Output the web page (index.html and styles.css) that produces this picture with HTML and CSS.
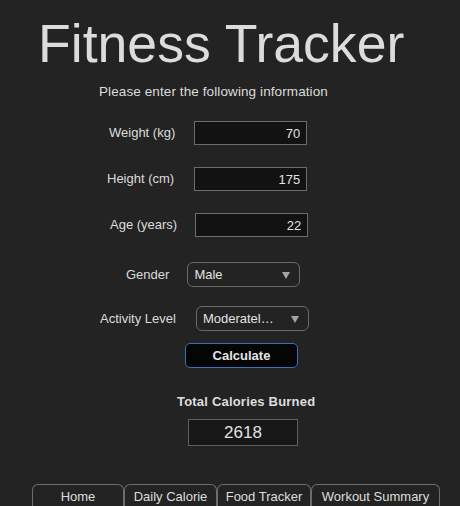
FILE: index.html
```html
<!DOCTYPE html>
<html lang="en">
<head>
<meta charset="utf-8">
<title>Fitness Tracker</title>
<link rel="stylesheet" href="styles.css">
</head>
<body>
<main class="app">
  <h1 class="title">Fitness Tracker</h1>
  <p class="subtitle">Please enter the following information</p>

  <div class="row row-weight">
    <label class="label" for="weight">Weight (kg)</label>
    <input class="field" id="weight" type="text" value="70">
  </div>
  <div class="row row-height">
    <label class="label" for="height">Height (cm)</label>
    <input class="field" id="height" type="text" value="175">
  </div>
  <div class="row row-age">
    <label class="label" for="age">Age (years)</label>
    <input class="field" id="age" type="text" value="22">
  </div>
  <div class="row row-gender">
    <span class="label">Gender</span>
    <div class="select"><span class="select-text">Male</span><span class="caret"></span></div>
  </div>
  <div class="row row-activity">
    <span class="label">Activity Level</span>
    <div class="select"><span class="select-text">Moderatel…</span><span class="caret"></span></div>
  </div>
  <div class="row row-button">
    <button class="btn" type="button">Calculate</button>
  </div>

  <div class="result-title">Total Calories Burned</div>
  <div class="result-row">
    <div class="result">2618</div>
  </div>

  <nav class="tabs">
    <div class="tab tab-home">Home</div>
    <div class="tab tab-daily">Daily Calorie</div>
    <div class="tab tab-food">Food Tracker</div>
    <div class="tab tab-workout">Workout Summary</div>
  </nav>
</main>
</body>
</html>
```

FILE: styles.css
```css
html, body {
  margin: 0;
  padding: 0;
  height: 506px;
  overflow: hidden;
  background: #232323;
}

body {
  font-family: "Liberation Sans", Arial, sans-serif;
  font-size: 13px;
  color: #dedede;
}

.app {
  display: flex;
  flex-direction: column;
}

.title {
  margin: 13px 0 0 0;
  padding-left: 38px;
  font-size: 53.6px;
  font-weight: normal;
  line-height: 60px;
  height: 60px;
  color: #dcdcdc;
}

.subtitle {
  margin: 11px 0 0 0;
  padding-left: 99px;
  line-height: 16px;
  font-size: 13.5px;
  letter-spacing: 0.1px;
  color: #dcdcdc;
}

.row {
  display: flex;
  align-items: center;
  gap: 18px;
}

.label {
  line-height: 16px;
  color: #dcdcdc;
}

.row-weight { margin-top: 21px; padding-left: 109px; gap: 19px; }
.row-height { margin-top: 22px; padding-left: 107px; gap: 20px; }
.row-age { margin-top: 22px; padding-left: 110px; gap: 18px; }
.row-gender { margin-top: 25px; padding-left: 126px; gap: 18px; }
.row-activity { margin-top: 19px; padding-left: 100px; gap: 20px; }
.row-button { margin-top: 12px; padding-left: 185px; }

.field {
  box-sizing: border-box;
  width: 113px;
  height: 24px;
  margin: 0;
  padding: 0 6px;
  background: #121212;
  border: 1px solid #6c6c6c;
  border-radius: 0;
  color: #e2e2e2;
  font-family: inherit;
  font-size: 13px;
  text-align: right;
  outline: none;
}

.select {
  box-sizing: border-box;
  width: 113px;
  height: 25px;
  display: flex;
  align-items: center;
  justify-content: space-between;
  padding: 0 9px 0 6px;
  border: 1px solid #6a6a6a;
  border-radius: 6px;
  color: #e2e2e2;
}

.select-text {
  line-height: 16px;
}

.caret {
  width: 0;
  height: 0;
  border-left: 4px solid transparent;
  border-right: 4px solid transparent;
  border-top: 7px solid #a4a4a4;
  margin-top: 1px;
}

.btn {
  box-sizing: border-box;
  width: 113px;
  height: 25px;
  margin: 0;
  padding: 0;
  background: #050505;
  border: 1px solid #3471bd;
  border-radius: 5px;
  color: #e6e6e6;
  font-family: inherit;
  font-size: 13px;
  font-weight: bold;
}

.result-title {
  margin-top: 26px;
  padding-left: 177px;
  line-height: 16px;
  font-weight: bold;
  letter-spacing: 0.2px;
  color: #dedede;
}

.result-row {
  margin-top: 9px;
  padding-left: 188px;
  display: flex;
}

.result {
  box-sizing: border-box;
  width: 110px;
  height: 27px;
  display: flex;
  align-items: center;
  justify-content: center;
  background: #171717;
  border: 1px solid #5f5f5f;
  font-size: 17px;
  color: #e2e2e2;
}

.tabs {
  margin-top: 38px;
  padding-left: 32px;
  display: flex;
}

.tab {
  box-sizing: border-box;
  height: 30px;
  padding: 4px 0 0 0;
  border: 1px solid #6c6c6c;
  border-bottom: none;
  border-radius: 6px 6px 0 0;
  text-align: center;
  line-height: 16px;
  color: #dedede;
  white-space: nowrap;
}

.tab-home { width: 92px; }
.tab-daily { width: 93px; }
.tab-food { width: 94px; }
.tab-workout { width: 129px; }
```
